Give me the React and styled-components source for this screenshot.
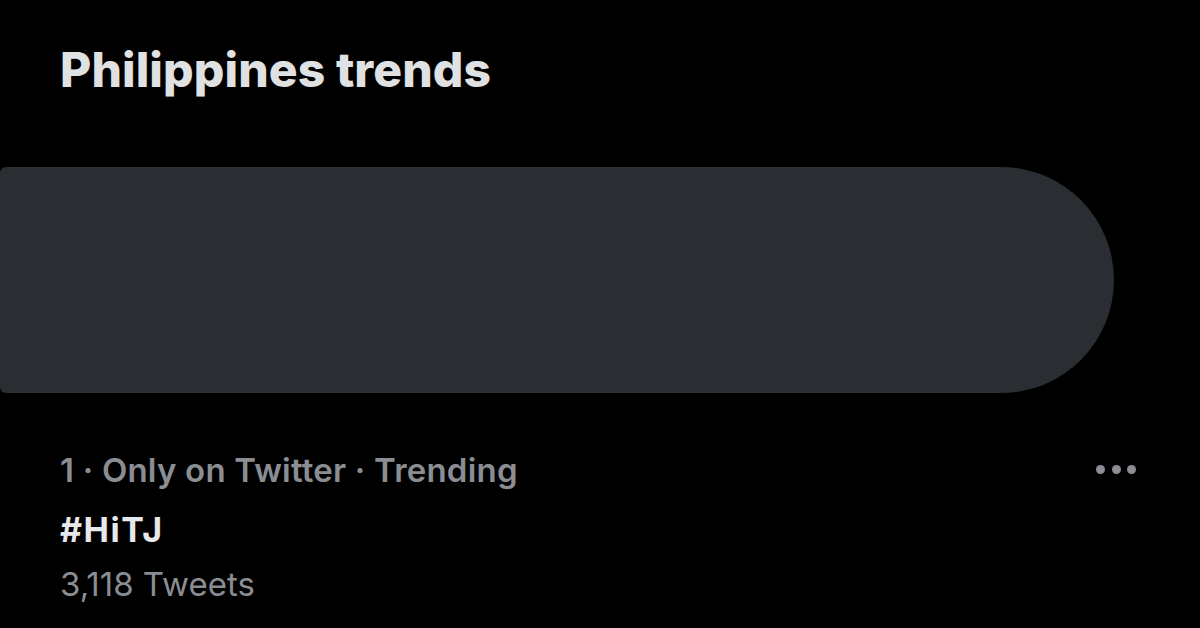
import React from "react";
import styled, { createGlobalStyle } from "styled-components";

const Global = createGlobalStyle`
  html, body { margin: 0; padding: 0; background: #000; }
  body { font-family: Inter, "Noto Sans", sans-serif; -webkit-font-smoothing: antialiased; }
  #root { width: 1200px; height: 628px; overflow: hidden; }
`;

const Page = styled.div`
  width: 1200px;
  height: 628px;
  background: #000;
  display: flex;
  flex-direction: column;
  overflow: hidden;
`;

const Title = styled.h1`
  margin: 0;
  padding: 41px 0 0 60px;
  font-size: 48px;
  font-weight: 800;
  line-height: 58px;
  letter-spacing: 0.1px;
  color: #e0e1e2;
`;

const Placeholder = styled.div`
  margin-top: 68px;
  width: 1114px;
  height: 226px;
  background: #2a2e32;
  border-radius: 6px 113px 113px 6px;
`;

const Trend = styled.div`
  display: flex;
  justify-content: space-between;
  align-items: flex-start;
  padding: 58px 60px 0 60px;
`;

const TrendText = styled.div`
  display: flex;
  flex-direction: column;
`;

const Meta = styled.div`
  font-size: 33px;
  font-weight: 600;
  line-height: 38px;
  color: #8a8e93;
  letter-spacing: 0.2px;
`;

const Tag = styled.div`
  margin-top: 22px;
  font-size: 34px;
  font-weight: 700;
  line-height: 38px;
  letter-spacing: 1.5px;
  color: #e7e8e9;
`;

const Count = styled.div`
  margin-top: 16px;
  font-size: 33px;
  font-weight: 400;
  line-height: 38px;
  color: #8a8e93;
`;

const More = styled.div`
  display: flex;
  gap: 6.5px;
  margin-top: 14px;
  margin-right: 4px;
`;

const Dot = styled.span`
  width: 9px;
  height: 9px;
  border-radius: 50%;
  background: #8a8d91;
`;

export default function App() {
  return (
    <Page>
      <Global />
      <Title>Philippines trends</Title>
      <Placeholder />
      <Trend>
        <TrendText>
          <Meta>1 · Only on Twitter · Trending</Meta>
          <Tag>#HiTJ</Tag>
          <Count>3,118 Tweets</Count>
        </TrendText>
        <More>
          <Dot />
          <Dot />
          <Dot />
        </More>
      </Trend>
    </Page>
  );
}
